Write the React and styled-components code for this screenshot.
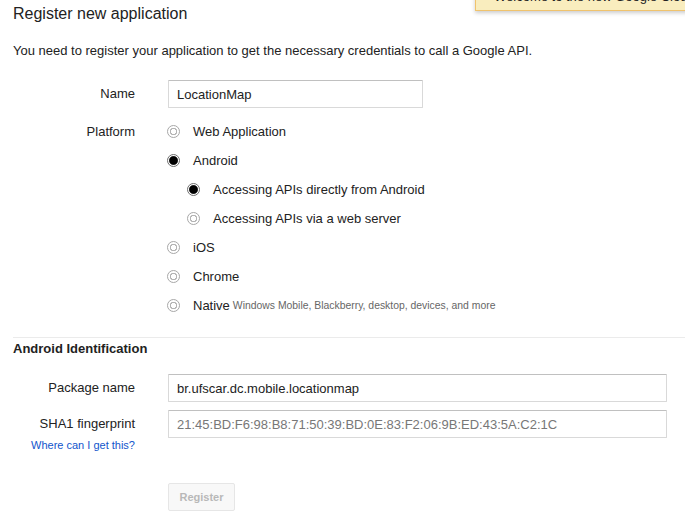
import styled, { createGlobalStyle } from "styled-components";

const GlobalStyle = createGlobalStyle`
  html, body {
    margin: 0;
    padding: 0;
    background: #fff;
  }

  body {
    font-family: "Liberation Sans", Arial, sans-serif;
    font-size: 13px;
    color: #222;
    overflow: hidden;
  }
`;

const platforms = [
  { label: "Web Application" },
  { label: "Android", checked: true },
  { label: "Accessing APIs directly from Android", checked: true, sub: true },
  { label: "Accessing APIs via a web server", sub: true },
  { label: "iOS" },
  { label: "Chrome" },
  {
    label: "Native",
    hint: "Windows Mobile, Blackberry, desktop, devices, and more",
  },
];

function App() {
  return (
    <Page>
      <GlobalStyle />
      <Notice>Welcome to the new Google Cloud Console!</Notice>

      <Title>Register new application</Title>
      <Intro>
        You need to register your application to get the necessary credentials
        to call a Google API.
      </Intro>

      <Form $top="21px">
        <Row>
          <Label>Name</Label>
          <TextInput $width="255px" defaultValue="LocationMap" />
        </Row>

        <Row $top="9px">
          <Label $line="29px">Platform</Label>
          <Options>
            {platforms.map((p) => (
              <Option key={p.label} $sub={p.sub}>
                <Radio $checked={p.checked} />
                <span>{p.label}</span>
                {p.hint && <Hint>{p.hint}</Hint>}
              </Option>
            ))}
          </Options>
        </Row>
      </Form>

      <Divider />

      <Section>
        <SectionTitle>Android Identification</SectionTitle>
        <Form $top="17px">
          <Row>
            <Label>Package name</Label>
            <TextInput
              $width="499px"
              defaultValue="br.ufscar.dc.mobile.locationmap"
            />
          </Row>
          <Row $top="8px">
            <LabelStack>
              <Label>SHA1 fingerprint</Label>
              <HelpLink href="#">Where can I get this?</HelpLink>
            </LabelStack>
            <TextInput
              $width="499px"
              $muted
              defaultValue="21:45:BD:F6:98:B8:71:50:39:BD:0E:83:F2:06:9B:ED:43:5A:C2:1C"
            />
          </Row>
          <Row $top="31px">
            <Spacer />
            <Button disabled>Register</Button>
          </Row>
        </Form>
      </Section>
    </Page>
  );
}

export default App;

const Page = styled.div`
  position: relative;
  width: 685px;
  height: 521px;
  padding-left: 13px;
  box-sizing: border-box;
  overflow: hidden;
`;

const Notice = styled.div`
  position: absolute;
  top: -20px;
  left: 475px;
  width: 260px;
  padding: 7px 16px 4px 18px;
  line-height: 18px;
  font-size: 13px;
  color: #222;
  white-space: nowrap;
  background: #f9edbe;
  border: 1px solid #f0c36d;
  box-shadow: 0 2px 4px rgba(0, 0, 0, 0.2);
`;

const Title = styled.h1`
  margin: 0;
  padding-top: 4px;
  font-size: 16px;
  line-height: 20px;
  font-weight: normal;
  color: #222;
`;

const Intro = styled.p`
  margin: 19px 0 0;
  line-height: 16px;
  color: #222;
`;

const Form = styled.div`
  display: flex;
  flex-direction: column;
  margin-top: ${({ $top }) => $top || "15px"};
`;

const Row = styled.div`
  display: flex;
  align-items: flex-start;
  gap: 33px;
  margin-top: ${({ $top }) => $top || "0"};
`;

const Label = styled.label`
  display: block;
  width: 122px;
  text-align: right;
  line-height: ${({ $line }) => $line || "28px"};
  color: #222;
`;

const LabelStack = styled.div`
  display: flex;
  flex-direction: column;
  align-items: flex-end;
  width: 122px;
`;

const HelpLink = styled.a`
  font-size: 11px;
  line-height: 14px;
  color: #15c;
  text-decoration: none;
`;

const Spacer = styled.div`
  width: 122px;
`;

const TextInput = styled.input`
  box-sizing: border-box;
  width: ${({ $width }) => $width};
  height: 28px;
  padding: 0 8px;
  font-family: "Liberation Sans", Arial, sans-serif;
  font-size: 13px;
  color: ${({ $muted }) => ($muted ? "#777" : "#222")};
  background: #fff;
  border: 1px solid #d9d9d9;
  border-top-color: #c0c0c0;
  border-radius: 1px;
  outline: none;
`;

const Options = styled.div`
  display: flex;
  flex-direction: column;
`;

const Option = styled.div`
  display: flex;
  align-items: center;
  height: 29px;
  padding-left: ${({ $sub }) => ($sub ? "20px" : "0")};
  color: #222;
  white-space: nowrap;
`;

const Radio = styled.span`
  box-sizing: border-box;
  flex: none;
  width: 13px;
  height: 13px;
  margin: 0 13px 0 -1px;
  border-radius: 50%;
  border: 1px solid ${({ $checked }) => ($checked ? "#6e6e6e" : "#a8a8a8")};
  background: ${({ $checked }) =>
    $checked
      ? "radial-gradient(circle, #000 0 3.8px, #555 4.3px, #fff 4.9px)"
      : "radial-gradient(circle, #fff 0 2.3px, #b4b4b4 2.7px 3.5px, #fff 4px)"};
`;

const Hint = styled.span`
  margin-left: 3px;
  font-size: 10.4px;
  color: #666;
`;

const Divider = styled.hr`
  margin: 17px 0 0;
  border: 0;
  border-top: 1px solid #ebebeb;
`;

const Section = styled.div`
  display: flex;
  flex-direction: column;
`;

const SectionTitle = styled.h2`
  margin: 3px 0 0;
  font-size: 13px;
  line-height: 16px;
  font-weight: bold;
  color: #222;
`;

const Button = styled.button`
  box-sizing: border-box;
  height: 28px;
  min-width: 67px;
  padding: 0 10px;
  font-family: "Liberation Sans", Arial, sans-serif;
  font-size: 11px;
  font-weight: bold;
  color: #b8b8b8;
  background: #f8f8f8;
  border: 1px solid #e6e6e6;
  border-radius: 2px;
`;
